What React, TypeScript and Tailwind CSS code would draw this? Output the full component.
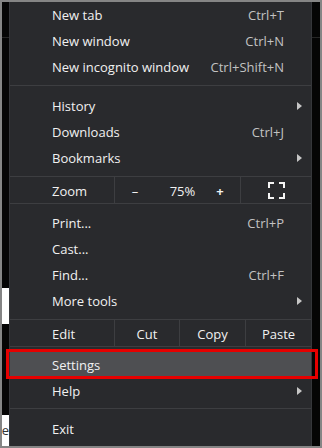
import React from 'react'

const Arrow = () => (
  <svg width="5" height="8" viewBox="0 0 5 8" className="shrink-0">
    <path d="M0 0 L5 4 L0 8 Z" fill="#c6c6c6" />
  </svg>
)

function Item({ label, shortcut, sub, active }: { label: string; shortcut?: string; sub?: boolean; active?: boolean }) {
  return (
    <div className={`flex items-center h-[26px] pt-[2px] pl-[42px] ${active ? 'bg-[#4e4f52]' : ''}`}>
      <span className="flex-1 text-[#f1f1f1]">{label}</span>
      {shortcut && <span className="text-[#c2c2c2] pr-[27px]">{shortcut}</span>}
      {sub && <span className="pr-[9px] -mt-[2px]"><Arrow /></span>}
    </div>
  )
}

const Sep = ({ top = 5 }: { top?: number }) => (
  <div className={top === 5 ? 'pt-[5px] pb-[7px]' : 'pt-[4px] pb-[7px]'}>
    <div className="h-px bg-[#3d3e41]" />
  </div>
)

export default function App() {
  return (
    <div className="relative w-[322px] h-[448px] border-2 border-[#858585] bg-black flex font-['Open_Sans',sans-serif] text-[13px] overflow-hidden">
      {/* page behind the menu, left side */}
      <div className="w-[7px] flex flex-col bg-[#050505]">
        <div className="mt-[35px] h-px bg-[#262626]" />
        <div className="mt-[250px] h-[36px] bg-white" />
        <div className="mt-[91px] h-[31px] bg-white overflow-hidden flex items-center justify-end text-[#333] leading-none">e</div>
      </div>

      <div className="w-[303px] h-full bg-[#292a2d] border-x border-[#35363a]">
        <Item label="New tab" shortcut="Ctrl+T" />
        <Item label="New window" shortcut="Ctrl+N" />
        <Item label="New incognito window" shortcut="Ctrl+Shift+N" />
        <Sep />
        <Item label="History" sub />
        <Item label="Downloads" shortcut="Ctrl+J" />
        <Item label="Bookmarks" sub />

        <div className="mt-[5px] flex h-[28px] border-y border-[#3d3e41] text-[#f1f1f1]">
          <div className="w-[105px] pl-[42px] pt-[3px] flex items-center border-r border-[#3d3e41]">Zoom</div>
          <div className="w-[126px] pt-[3px] flex items-center border-r border-[#3d3e41]">
            <span className="w-[40px] text-center">–</span>
            <span className="w-[55px] text-center">75%</span>
            <span className="w-[20px] text-center font-bold">+</span>
          </div>
          <div className="flex-1 flex items-center justify-center">
            <svg width="17" height="17" viewBox="0 0 17 17" fill="none" stroke="#f4f4f4" strokeWidth="2">
              <path d="M1 6 V1 H6 M11 1 H16 V6 M16 11 V16 H11 M6 16 H1 V11" />
            </svg>
          </div>
        </div>

        <div className="mt-[6px]">
          <Item label="Print..." shortcut="Ctrl+P" />
          <Item label="Cast..." />
          <Item label="Find..." shortcut="Ctrl+F" />
          <Item label="More tools" sub />
        </div>

        <div className="mt-[5px] flex h-[28px] border-y border-[#3d3e41] text-[#f1f1f1]">
          <div className="w-[105px] pl-[42px] pt-[3px] flex items-center border-r border-[#3d3e41]">Edit</div>
          <div className="w-[65px] pt-[3px] flex items-center justify-center border-r border-[#3d3e41]">Cut</div>
          <div className="w-[66px] pt-[3px] flex items-center justify-center border-r border-[#3d3e41]">Copy</div>
          <div className="flex-1 pt-[3px] flex items-center justify-center">Paste</div>
        </div>

        <div className="mt-[5px]">
          <Item label="Settings" active />
          <Item label="Help" sub />
        </div>
        <Sep top={4} />
        <Item label="Exit" />
      </div>

      {/* page behind the menu, right side */}
      <div className="flex-1 flex flex-col bg-[#050505]">
        <div className="mt-[35px] h-px bg-[#262626]" />
      </div>

      {/* red annotation box */}
      <div className="absolute left-[4px] top-[347px] w-[312px] h-[30px] border-[3px] border-[#e60000]" />
    </div>
  )
}
